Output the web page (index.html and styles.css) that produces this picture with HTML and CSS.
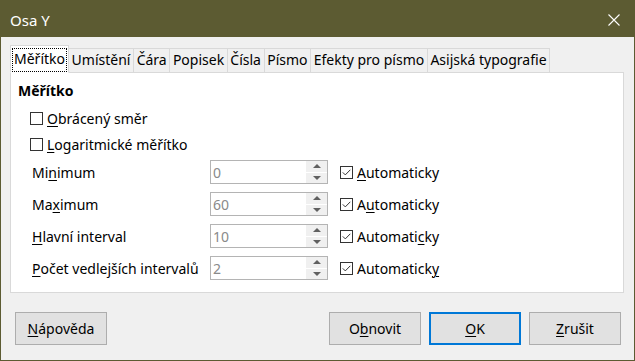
FILE: index.html
```html
<!DOCTYPE html>
<html lang="cs">
<head>
<meta charset="utf-8">
<title>Osa Y</title>
<link rel="stylesheet" href="styles.css">
</head>
<body>
<div class="window">
  <div class="titlebar">
    <span class="title">Osa Y</span>
    <svg class="close" width="12" height="12" viewBox="0 0 12 12"><path d="M0.5 0.5L11.5 11.5M11.5 0.5L0.5 11.5" stroke="#fff" stroke-width="1.1" fill="none"/></svg>
  </div>
  <div class="content">
    <div class="tabs">
      <div class="tab active"><span class="focus">Měřítko</span></div>
      <div class="tab">Umístění</div>
      <div class="tab">Čára</div>
      <div class="tab">Popisek</div>
      <div class="tab">Čísla</div>
      <div class="tab">Písmo</div>
      <div class="tab">Efekty pro písmo</div>
      <div class="tab">Asijská typografie</div>
    </div>
    <div class="panel">
      <div class="heading">Měřítko</div>
      <div class="checkrow">
        <span class="cb"></span><span><u>O</u>brácený směr</span>
      </div>
      <div class="checkrow">
        <span class="cb"></span><span><u>L</u>ogaritmické měřítko</span>
      </div>
      <div class="grid">
        <div class="lbl">Mi<u>n</u>imum</div>
        <div class="spin"><span class="val">0</span><span class="btns"><span class="up"></span><span class="down"></span></span></div>
        <div class="auto"><span class="cb checked"><svg width="9" height="7" viewBox="0 0 9 7"><path d="M0.8 3.4L3.3 5.9L8.3 0.8" stroke="#333" stroke-width="1" fill="none"/></svg></span><span><u>A</u>utomaticky</span></div>

        <div class="lbl">Ma<u>x</u>imum</div>
        <div class="spin"><span class="val">60</span><span class="btns"><span class="up"></span><span class="down"></span></span></div>
        <div class="auto"><span class="cb checked"><svg width="9" height="7" viewBox="0 0 9 7"><path d="M0.8 3.4L3.3 5.9L8.3 0.8" stroke="#333" stroke-width="1" fill="none"/></svg></span><span>A<u>u</u>tomaticky</span></div>

        <div class="lbl"><u>H</u>lavní interval</div>
        <div class="spin"><span class="val">10</span><span class="btns"><span class="up"></span><span class="down"></span></span></div>
        <div class="auto"><span class="cb checked"><svg width="9" height="7" viewBox="0 0 9 7"><path d="M0.8 3.4L3.3 5.9L8.3 0.8" stroke="#333" stroke-width="1" fill="none"/></svg></span><span>Automati<u>c</u>ky</span></div>

        <div class="lbl"><u>P</u>očet vedlejších intervalů</div>
        <div class="spin"><span class="val">2</span><span class="btns"><span class="up"></span><span class="down"></span></span></div>
        <div class="auto"><span class="cb checked"><svg width="9" height="7" viewBox="0 0 9 7"><path d="M0.8 3.4L3.3 5.9L8.3 0.8" stroke="#333" stroke-width="1" fill="none"/></svg></span><span>Automatick<u>y</u></span></div>
      </div>
    </div>
    <div class="buttons">
      <button class="btn"><u>N</u>ápověda</button>
      <span class="spacer"></span>
      <button class="btn">O<u>b</u>novit</button>
      <button class="btn default"><u>O</u>K</button>
      <button class="btn"><u>Z</u>rušit</button>
    </div>
  </div>
</div>
</body>
</html>
```
FILE: styles.css
```css
* { box-sizing: border-box; }
html, body { margin: 0; padding: 0; }
body {
  font-family: "Noto Sans", "Open Sans", sans-serif;
  font-size: 14px;
  color: #000;
  background: #f0f0f0;
}
u { text-decoration: underline; text-underline-offset: 2px; text-decoration-thickness: 1px; }
.window {
  width: 635px;
  height: 361px;
  background: #f0f0f0;
  border: 1px solid #5c5b32;
  border-top: none;
  display: flex;
  flex-direction: column;
}
.titlebar {
  height: 37px;
  background: #5c5b32;
  display: flex;
  align-items: center;
  padding: 0 14px 0 9px;
  color: #fff;
  flex-shrink: 0;
}
.title { font-size: 15px; flex: 1; padding-top: 2px; }
.close { margin-top: 3px; }
.content {
  padding: 0 10px 0 9px;
  display: flex;
  flex-direction: column;
}
.tabs {
  display: flex;
  align-items: flex-end;
  height: 36px;
  margin-bottom: -1px;
  position: relative;
  z-index: 1;
}
.tab {
  height: 25px;
  padding: 0 2.6px;
  border: 1px solid #d9d9d9;
  border-left: none;
  border-bottom: 1px solid #d9d9d9;
  background: #f0f0f0;
  line-height: 22px;
  white-space: nowrap;
}
.tab.active {
  height: 28px;
  background: #fff;
  border-left: 1px solid #d9d9d9;
  border-bottom: 1px solid #fff;
  padding: 3px 2px 0 2px;
  line-height: 20px;
}
.focus {
  display: inline-block;
  outline: 1px dotted #000;
  outline-offset: 0;
  height: 22px;
  line-height: 20px;
  padding: 0 1px;
}
.panel {
  height: 221px;
  background: #fff;
  border: 1px solid #d9d9d9;
  padding: 8px 0 0 7px;
  display: flex;
  flex-direction: column;
}
.heading {
  font-weight: bold;
  line-height: 20px;
  height: 20px;
  margin-bottom: 4px;
}
.checkrow {
  height: 26px;
  display: flex;
  align-items: center;
  padding-left: 12px;
  gap: 4px;
}
.cb {
  width: 13px;
  height: 13px;
  border: 1px solid #333;
  background: #fff;
  display: inline-flex;
  align-items: center;
  justify-content: center;
  flex-shrink: 0;
}
.grid {
  margin-top: 3px;
  display: grid;
  grid-template-columns: 180px 118px auto;
  grid-auto-rows: 24px;
  row-gap: 8px;
  column-gap: 12px;
  align-items: center;
}
.lbl { padding-left: 14px; white-space: nowrap; }
.spin {
  height: 24px;
  border: 1px solid #b4b4b4;
  display: flex;
  align-items: center;
  justify-content: space-between;
  padding-left: 2px;
}
.val { color: #8a8a8a; }
.btns {
  display: flex;
  flex-direction: column;
  width: 21px;
  height: 22px;
  margin-right: 0;
  gap: 1px;
}
.up, .down {
  flex: 1;
  background: #f0f0f0;
  display: flex;
  align-items: center;
  justify-content: center;
}
.up::after {
  content: "";
  border-left: 4px solid transparent;
  border-right: 4px solid transparent;
  border-bottom: 4px solid #606060;
}
.down::after {
  content: "";
  border-left: 4px solid transparent;
  border-right: 4px solid transparent;
  border-top: 4px solid #606060;
}
.auto {
  display: flex;
  align-items: center;
  gap: 4px;
}
.cb.checked { border-color: #333; }
.buttons {
  display: flex;
  margin-top: 19px;
  padding: 0 3px 0 5px;
  gap: 8px;
}
.spacer { flex: 1; }
.btn {
  width: 92px;
  height: 33px;
  background: #e1e1e1;
  border: 1px solid #adadad;
  font-family: inherit;
  font-size: 14px;
  color: #000;
  padding: 0;
  margin: 0;
}
.btn.default { border: 2px solid #0078d7; }
```
